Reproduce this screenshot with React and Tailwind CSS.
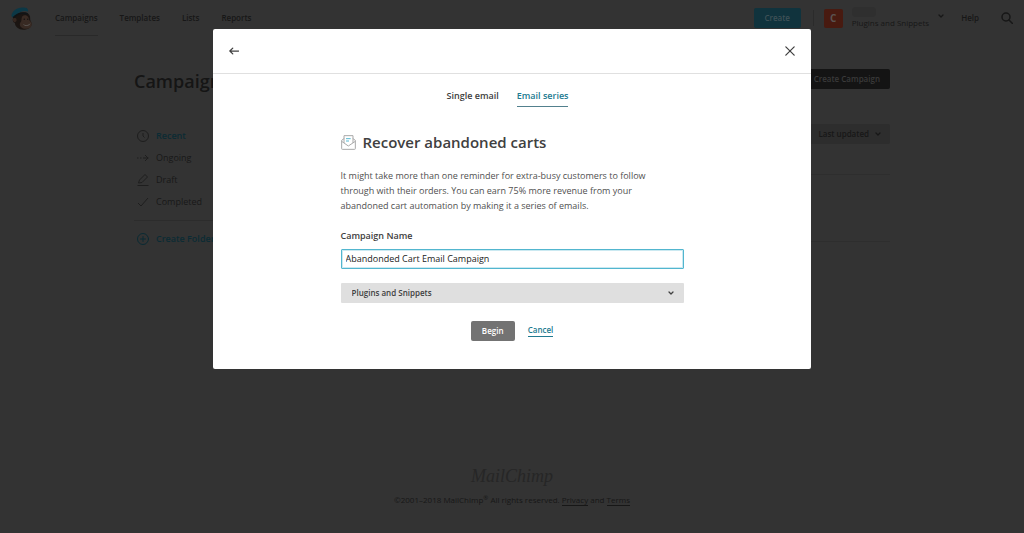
import { useState } from 'react'

const navItems = ['Campaigns', 'Templates', 'Lists', 'Reports']

function Icon({ className, children, width = 1.5, cap = 'round' }) {
  return (
    <svg
      viewBox="0 0 24 24"
      fill="none"
      stroke="currentColor"
      strokeWidth={width}
      strokeLinecap={cap}
      strokeLinejoin="round"
      className={className}
      aria-hidden="true"
    >
      {children}
    </svg>
  )
}

const folders = [
  {
    label: 'Recent',
    active: true,
    icon: (
      <>
        <circle cx="12" cy="12" r="11" />
        <path d="M12 6v6l3 3" />
      </>
    ),
  },
  { label: 'Ongoing', icon: <path d="M0 12h3M6 12h3M12 12h11M16 6l6 6-6 6" /> },
  { label: 'Draft', icon: <path d="M1 23h22M3 18l2-6L16 1l5 5L10 17l-7 1z" /> },
  { label: 'Completed', icon: <path d="M2 14l6 6L22 4" /> },
]

function Chevron({ className }) {
  return (
    <Icon className={className} width={5}>
      <path d="M4 8l8 8 8-8" />
    </Icon>
  )
}

function Freddie() {
  return (
    <svg viewBox="2 1 63 66" className="h-[23px] w-[22px]" aria-hidden="true">
      <path d="M12 28c-7 5-6 16 1 19 1 12 12 20 27 19 13-1 21-8 21-17 0-5-4-8-4-13 1-9-4-17-13-19-14-3-27 2-32 11z" fill="#1b1512" />
      <path d="M34 28c5-5 14-4 17 2 3 3 2 8 5 11 7 4 7 13 2 18-6 5-17 6-24 2-7-4-9-11-4-17 3-3 1-11 4-16z" fill="#382a23" />
      <path d="M9 33c5-3 10 1 9 7-1 4-5 6-8 3-3-2-4-8-1-10z" fill="#35261f" />
      <path d="M36 50c7 5 16 4 22-3-1 9-16 13-22 3z" fill="#5a5653" />
      <circle cx="40" cy="36" r="2" fill="#111" />
      <circle cx="50" cy="36" r="2" fill="#111" />
      <path d="M3 27C5 10 22-1 43 3c6 1 9 5 8 11-11-4-27 0-36 14-3 4-9 4-12-1z" fill="#0c3846" />
      <path d="M7 30c9-11 23-16 42-12 2 2 1 4-1 5-14-4-26-2-34 8-3 3-7 2-7-1z" fill="#101416" />
    </svg>
  )
}

function Header() {
  return (
    <header className="flex h-9 items-center px-[11px] text-[8px] font-semibold text-[#171717]">
      <a href="#home" aria-label="Home">
        <Freddie />
      </a>
      <nav className="ml-[22px] flex h-full gap-[22px]">
        {navItems.map((item, index) => (
          <a
            key={item}
            href={`#${item.toLowerCase()}`}
            className={`flex items-center border-b pt-px ${index === 0 ? 'border-[#292929]' : 'border-transparent'}`}
          >
            {item}
          </a>
        ))}
      </nav>
      <div className="ml-auto flex items-center">
        <button type="button" className="h-5 w-[47px] rounded-[2px] bg-[#10333d] text-[8px] text-[#3f5157]">
          Create
        </button>
        <span className="ml-3 h-4 w-px bg-[#2b2b2b]" />
        <span className="ml-[10px] flex size-[19px] items-center justify-center rounded-[2px] bg-[#481a10] text-[10px] font-bold text-[#5b5350]">
          C
        </span>
        <button type="button" className="ml-[9px] flex items-center gap-[9px] text-[8px] font-normal">
          <span className="flex flex-col items-start">
            <span className="h-[10px] w-6 rounded-sm bg-[#2f2f2f]" />
            <span>Plugins and Snippets</span>
          </span>
          <Chevron className="mb-1 size-[6px]" />
        </button>
        <a href="#help" className="ml-[17px]">Help</a>
        <button type="button" aria-label="Search" className="ml-[22px]">
          <Icon className="size-[12px]" width={3}>
            <circle cx="10" cy="10" r="8" />
            <path d="M16 16l7 7" />
          </Icon>
        </button>
      </div>
    </header>
  )
}

function Page() {
  return (
    <div className="flex min-h-screen flex-col bg-[#333]">
      <Header />
      <main className="mx-auto w-full max-w-[756px]">
        <div className="mt-[33px] flex items-start justify-between">
          <h1 className="text-[18px] leading-6 font-semibold text-[#151515]">Campaigns</h1>
          <button type="button" className="h-5 rounded-[2px] bg-[#141414] px-[10px] text-[8px] font-semibold text-[#3a3a3a]">
            Create Campaign
          </button>
        </div>
        <div className="mt-[31px] flex gap-6">
          <aside className="w-[150px] pt-px text-[9px]">
            <ul className="border-b border-[#2c2c2c] pb-[7px]">
              {folders.map(({ label, active, icon }) => (
                <li key={label}>
                  <a
                    href={`#${label.toLowerCase()}`}
                    className={`flex h-[22px] items-center gap-[7px] pl-[3px] ${active ? 'font-semibold text-[#0b2b34]' : 'text-[#181818]'}`}
                  >
                    <Icon className="size-[12px] text-[#1e1e1e]" width={2} cap="butt">{icon}</Icon>
                    {label}
                  </a>
                </li>
              ))}
            </ul>
            <button type="button" className="mt-[7px] flex h-[22px] items-center gap-[7px] pl-[3px] font-semibold text-[#0b2b34]">
              <Icon className="size-[12px]" width={2}>
                <circle cx="12" cy="12" r="11" />
                <path d="M12 7v10M7 12h10" />
              </Icon>
              Create Folder
            </button>
          </aside>
          <section className="flex-1">
            <div className="flex justify-end">
              <button type="button" className="flex h-5 items-center gap-[6px] rounded-[2px] bg-[#2d2d2d] px-[9px] text-[8px] font-semibold text-[#171717]">
                Last updated
                <Chevron className="size-[6px]" />
              </button>
            </div>
            <div className="mt-[30px] h-[68px] border-y border-[#2e2e2e]" />
          </section>
        </div>
      </main>
      <footer className="mt-auto flex flex-col items-center gap-2 pb-[27px] text-[8px] text-[#171717]">
        <div className="font-['Liberation_Serif',serif] text-[18px] leading-5 text-[#262626] italic">MailChimp</div>
        <p className="leading-3">
          ©2001–2018 MailChimp<sup>®</sup> All rights reserved.{' '}
          <a href="#privacy" className="border-b border-[#171717]">Privacy</a> and{' '}
          <a href="#terms" className="border-b border-[#171717]">Terms</a>
        </p>
      </footer>
    </div>
  )
}

function CampaignModal() {
  const [name, setName] = useState('Abandonded Cart Email Campaign')

  return (
    <div className="fixed inset-0 flex items-start justify-center pt-[29px]">
      <div role="dialog" aria-label="Recover abandoned carts" className="w-full max-w-[598px] rounded-[2px] bg-white pb-7 text-[#404040]">
        <div className="flex h-[45px] items-center justify-between border-b border-[#e0e0e0] px-4">
          <button type="button" aria-label="Back">
            <Icon className="size-[10px]" width={3}>
              <path d="M23 12H2M9 5l-7 7 7 7" />
            </Icon>
          </button>
          <button type="button" aria-label="Close">
            <Icon className="size-[10px]" width={3}>
              <path d="M2 2l20 20M22 2L2 22" />
            </Icon>
          </button>
        </div>
        <div className="mx-auto w-full max-w-[343px]">
          <div className="mt-[15px] flex justify-center gap-[18px] pr-[9px] text-[9px] font-semibold">
            <button type="button" className="h-[18px] border-b border-transparent pb-1">Single email</button>
            <button type="button" className="h-[18px] border-b border-[#52808d] pb-1 text-[#217a90]">Email series</button>
          </div>
          <h2 className="mt-[23px] flex items-center gap-[7px] text-[15px] leading-6 font-semibold">
            <svg viewBox="0 0 45 45" fill="none" stroke="#a9a9a9" strokeWidth="3" strokeLinejoin="round" className="size-[15px]" aria-hidden="true">
              <path d="M10 10L2 16v25q0 2 2 2h37q2 0 2-2V16l-8-6" />
              <path d="M9 24V2h27v22" />
              <path d="M2 19l20 14 21-14" />
              <path d="M15 11h14M15 18h9" stroke="#58b9d2" />
            </svg>
            Recover abandoned carts
          </h2>
          <p className="mt-[14px] max-w-[320px] text-[9px] leading-[15px] text-[#505050]">
            It might take more than one reminder for extra-busy customers to follow through with their orders. You can earn 75% more revenue from your abandoned cart automation by making it a series of emails.
          </p>
          <label htmlFor="campaign-name" className="mt-[15px] block text-[9px] leading-4 font-semibold">Campaign Name</label>
          <input
            id="campaign-name"
            value={name}
            onChange={(event) => setName(event.target.value)}
            className="mt-1 h-5 w-full rounded-[1px] border border-[#52b6cf] px-1 text-[9px] text-[#222] ring-1 ring-[#52b6cf]/30 outline-none ring-inset"
          />
          <div className="mt-[14px] grid items-center">
            <select aria-label="List" className="col-start-1 row-start-1 h-5 w-full appearance-none rounded-[1px] bg-[#dfdfdf] px-[11px] text-[8px] font-semibold">
              <option>Plugins and Snippets</option>
            </select>
            <Chevron className="pointer-events-none col-start-1 row-start-1 mr-[10px] size-[6px] justify-self-end" />
          </div>
          <div className="mt-[18px] flex items-center justify-center gap-[13px] text-[8px] font-semibold">
            <button type="button" className="h-5 w-11 rounded-[2px] bg-[#737373] text-white">Begin</button>
            <a href="#cancel" className="border-b border-[#217a90] text-[#217a90]">Cancel</a>
          </div>
        </div>
      </div>
    </div>
  )
}

function App() {
  return (
    <div className="font-['Open_Sans',sans-serif]">
      <Page />
      <CampaignModal />
    </div>
  )
}

export default App
